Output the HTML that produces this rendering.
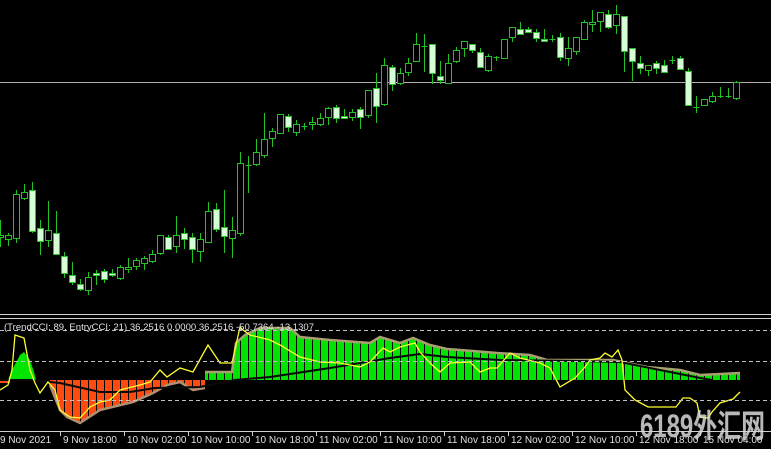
<!DOCTYPE html>
<html><head><meta charset="utf-8"><style>
html,body{margin:0;padding:0;background:#000;width:771px;height:449px;overflow:hidden}
svg{display:block}
text{font-family:"Liberation Sans","Noto Sans CJK SC",sans-serif}
</style></head><body>
<svg id="s" width="771" height="449" xmlns="http://www.w3.org/2000/svg">
<rect width="771" height="449" fill="#000"/>
<line x1="0" y1="82.5" x2="771" y2="82.5" stroke="#b0b0b0" stroke-width="1"/>
<g id="candles"></g>
<line x1="0" y1="314.5" x2="771" y2="314.5" stroke="#d0d0d0"/>
<line x1="0" y1="318.5" x2="771" y2="318.5" stroke="#d0d0d0"/>
<g id="ind"></g>
<g stroke="#c0c0c0" stroke-dasharray="4,3" stroke-width="1">
<line x1="0" y1="330.5" x2="771" y2="330.5"/>
<line x1="0" y1="361.5" x2="771" y2="361.5"/>
<line x1="0" y1="400.5" x2="771" y2="400.5"/>
</g>
<text x="4" y="330" fill="#e0e0e0" font-size="9.5" textLength="310" lengthAdjust="spacing">(TrendCCI: 89, EntryCCI: 21)  36.2516 0.0000 36.2516 -50.7364 -13.1307</text>
<line x1="0" y1="431.5" x2="771" y2="431.5" stroke="#d0d0d0"/>
<g id="axis" fill="#e0e0e0" font-size="10"></g>
<text x="640" y="437" fill="#d8d8d8" fill-opacity="0.85" font-size="32" font-weight="bold" textLength="125" lengthAdjust="spacingAndGlyphs">6189外汇网</text>
</svg>
<script>
var NS="http://www.w3.org/2000/svg";
function el(p,t,a){var e=document.createElementNS(NS,t);for(var k in a)e.setAttribute(k,a[k]);p.appendChild(e);return e;}
var C=[[0,235,237,220,247,0],[8,235,239,233,246,0],[16,194,238,190,243,0],[24,192,198,184,200,0],[32,190,231,182,233,1],[40,228,241,220,255,1],[48,230,240,201,247,0],[56,233,254,211,255,1],[64,256,273,252,278,1],[72,275,282,262,285,1],[80,284,289,279,291,1],[88,277,290,272,295,0],[96,273,275,270,285,1],[104,271,279,269,283,1],[112,273,275,269,277,1],[120,267,278,265,280,0],[128,267,269,258,273,0],[136,260,266,258,270,0],[144,258,263,256,270,0],[152,254,261,250,263,0],[160,235,253,235,255,0],[168,237,249,235,250,1],[176,235,246,216,253,0],[184,233,239,228,249,1],[192,237,249,233,263,1],[200,239,251,233,262,0],[208,211,242,202,242,0],[216,209,229,203,232,1],[224,227,236,190,253,1],[232,230,238,217,258,0],[240,163,233,152,236,0],[248,165,166,156,193,0],[256,152,164,139,166,0],[264,139,155,113,158,0],[272,131,138,128,147,0],[280,114,133,114,133,0],[288,116,127,114,132,1],[296,124,132,120,136,0],[304,126,127,123,130,0],[312,122,124,117,130,0],[320,118,124,113,126,0],[328,108,117,107,125,0],[336,107,118,105,123,1],[344,116,118,109,119,1],[352,112,117,109,121,0],[360,109,117,107,129,1],[368,90,115,90,118,0],[376,88,106,73,123,1],[384,65,104,58,106,0],[392,67,84,65,91,1],[400,73,83,68,85,0],[408,63,72,58,76,0],[416,44,61,33,62,0],[424,46,47,34,72,0],[432,44,73,44,84,1],[440,76,80,61,84,1],[448,63,83,54,83,0],[456,50,61,47,63,0],[464,41,48,41,57,0],[472,44,50,44,53,1],[480,52,67,48,68,1],[488,56,70,54,72,0],[496,57,58,56,61,0],[504,39,58,39,58,0],[512,27,37,27,42,0],[520,29,34,22,35,1],[528,29,32,27,32,1],[536,32,38,29,42,1],[544,39,41,29,42,1],[552,39,40,35,42,0],[560,37,57,33,61,1],[568,48,58,37,66,0],[576,37,51,37,55,0],[584,22,39,20,39,0],[592,22,24,10,32,0],[600,12,21,12,32,0],[608,14,27,10,29,1],[616,14,25,5,34,0],[624,16,51,16,72,1],[632,48,61,48,81,1],[640,63,68,56,74,1],[648,65,70,65,76,0],[656,63,68,61,74,1],[664,65,72,60,72,1],[672,60,61,56,64,0],[680,58,69,56,69,1],[688,71,105,68,105,1],[696,107,108,96,113,0],[704,99,105,99,105,0],[712,96,101,92,103,0],[720,96,97,87,98,1],[728,96,97,88,98,1],[736,82,98,81,100,0]];
var g=document.getElementById("candles");
C.forEach(function(c){var x=c[0]+0.5;
el(g,"line",{x1:x,y1:c[3],x2:x,y2:c[4],stroke:"#22c422","stroke-width":1});
var h=Math.max(c[2]-c[1],1);
if(h<=1){el(g,"line",{x1:x-3,y1:c[1]+0.5,x2:x+3,y2:c[1]+0.5,stroke:"#22c422"});}
else el(g,"rect",{x:x-3,y:c[1]+0.5,width:6,height:h,fill:c[5]?"#d4ffd4":"#000",stroke:"#22c422","stroke-width":1});
});
function interp(pts,x){for(var i=0;i<pts.length-1;i++){if(x>=pts[i][0]&&x<=pts[i+1][0]){var t=(x-pts[i][0])/(pts[i+1][0]-pts[i][0]);return pts[i][1]+t*(pts[i+1][1]-pts[i][1]);}}return pts[pts.length-1][1];}
var ind=document.getElementById("ind");var Z=380;
var G=[[205,372],[232,372],[236,343],[245,335],[260,328],[290,328],[300,337],[330,340],[370,343],[380,337],[400,343],[413,338],[430,345],[447,349],[473,351],[497,353],[530,355],[547,360],[613,360],[647,367],[680,370],[700,375],[740,373]];
var O=[[50,385],[60,410],[67,417],[80,423],[100,410],[133,402],[153,393],[167,385],[180,382],[193,390],[205,388]];
var path="M205,"+Z;G.forEach(function(p){path+=" L"+p[0]+","+p[1];});path+=" L740,"+Z+" Z";
el(ind,"path",{d:path,fill:"#00e400"});
var op="M50,"+Z;O.forEach(function(p){op+=" L"+p[0]+","+p[1];});op+=" L205,"+Z+" Z";
el(ind,"path",{d:op,fill:"#ff4a10"});
el(ind,"path",{d:"M8,380 L12,370 L20,355 L24,352 L30,360 L34,372 L36,380 Z",fill:"#00e400"});
el(ind,"rect",{x:0,y:380,width:10,height:3,fill:"#ff4a10"});
for(var x=8;x<=740;x+=8){var yt=x>=205&&x<=740?interp(G,x):(x>=50&&x<=205?interp(O,x):null);if(yt!==null)el(ind,"line",{x1:x+0.5,y1:Math.min(yt,Z),x2:x+0.5,y2:Math.max(yt,Z),stroke:"#000","stroke-width":1});}
var gp="";G.forEach(function(p,i){gp+=(i?" L":"M")+p[0]+","+p[1];});
el(ind,"path",{d:gp,fill:"none",stroke:"#a8a070","stroke-width":2.5});
var opp="";O.forEach(function(p,i){opp+=(i?" L":"M")+p[0]+","+p[1];});
el(ind,"path",{d:opp,fill:"none",stroke:"#b09070","stroke-width":2.5});
el(ind,"polyline",{points:"0,380 30,380 60,383 100,392 130,392 155,388 200,387 235,380 270,377 330,368 390,358 420,354 447,357 500,360 580,361 620,362 650,368 700,378 712,380",fill:"none",stroke:"#0a0a0a","stroke-width":2});
el(ind,"polyline",{points:"0,390 8,385 12,370 15,335 24,338 30,370 35,383 40,393 48,382 55,390 60,410 70,417 80,418 90,407 100,402 110,400 120,390 140,385 150,382 160,370 167,377 180,368 193,372 208,345 220,363 232,363 240,327 243,330 250,335 270,340 280,345 300,357 320,362 340,363 360,367 370,362 383,348 390,352 400,347 415,343 420,352 430,363 440,372 450,363 470,362 480,372 490,368 497,368 510,353 520,358 540,363 550,368 560,387 575,378 585,367 590,360 600,358 605,353 612,357 618,350 622,360 625,390 635,400 648,407 676,407 683,398 690,398 697,403 700,417 708,418 712,412 720,403 733,399 740,392",fill:"none",stroke:"#ffff30","stroke-width":1.3});
var ax=document.getElementById("axis");
var L=[[0,"9 Nov 2021"],[63,"9 Nov 18:00"],[127,"10 Nov 02:00"],[191,"10 Nov 10:00"],[255,"10 Nov 18:00"],[319,"11 Nov 02:00"],[383,"11 Nov 10:00"],[447,"11 Nov 18:00"],[511,"12 Nov 02:00"],[575,"12 Nov 10:00"],[639,"12 Nov 18:00"],[703,"15 Nov 04:00"]];
L.forEach(function(l){var t=el(ax,"text",{x:l[0],y:443});t.textContent=l[1];
el(ax,"line",{x1:l[0]-2.5,y1:432,x2:l[0]-2.5,y2:436,stroke:"#d0d0d0"});});
</script>
</body></html>
